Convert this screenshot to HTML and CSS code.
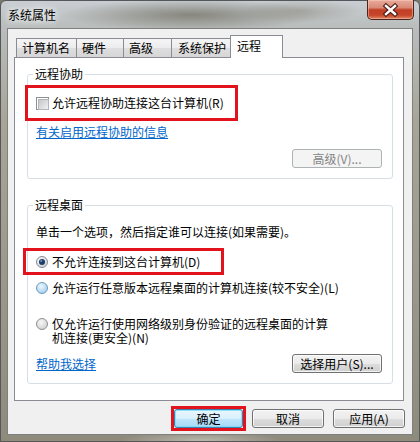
FILE: index.html
```html
<!DOCTYPE html>
<html lang="zh-CN">
<head>
  <meta charset="UTF-8">
  <title>系统属性</title>
  <link rel="stylesheet" href="styles.css">
</head>
<body>
  <div class="window">
    <!-- Title bar -->
    <div class="titlebar">
      <span class="title">系统属性</span>
      <div class="close-btn">
        <svg width="47" height="20" viewBox="0 0 47 20">
          <path d="M19 6 L28 14 M28 6 L19 14" stroke="#4a1d15" stroke-width="4.6" stroke-linecap="square"/>
          <path d="M19 6 L28 14 M28 6 L19 14" stroke="#fff" stroke-width="2.4" stroke-linecap="square"/>
        </svg>
      </div>
    </div>

    <!-- Client area -->
    <div class="client">
      <div class="tabs">
        <div class="tab tab-name">计算机名</div>
        <div class="tab tab-hw">硬件</div>
        <div class="tab tab-adv">高级</div>
        <div class="tab tab-sys">系统保护</div>
        <div class="tab tab-remote active">远程</div>
      </div>

      <div class="panel">
        <fieldset class="group group-assist">
          <legend>远程协助</legend>
          <div class="mark mark-check">
            <span class="checkbox"></span>
            <span>允许远程协助连接这台计算机(R)</span>
          </div>
          <a class="link">有关启用远程协助的信息</a>
          <div class="btn-row">
            <button class="btn btn-wide disabled">高级(V)...</button>
          </div>
        </fieldset>

        <fieldset class="group group-desktop">
          <legend>远程桌面</legend>
          <p class="hint">单击一个选项，然后指定谁可以连接(如果需要)。</p>
          <div class="mark mark-radio">
            <div class="option">
              <svg class="radio" width="12" height="12" viewBox="0 0 12 12">
                <defs>
                  <radialGradient id="r1" cx="40%" cy="35%" r="70%">
                    <stop offset="0" stop-color="#ffffff"/>
                    <stop offset="1" stop-color="#c9cdd1"/>
                  </radialGradient>
                </defs>
                <circle cx="6" cy="6" r="5.5" fill="url(#r1)" stroke="#8a8e93"/>
                <circle cx="6" cy="6" r="3" fill="#1d3c66"/>
                <circle cx="5.2" cy="5.1" r="1" fill="#6f9cd0"/>
              </svg>
              <span>不允许连接到这台计算机(D)</span>
            </div>
          </div>
          <div class="option option-any">
            <svg class="radio" width="12" height="12" viewBox="0 0 12 12">
              <defs>
                <radialGradient id="r2" cx="40%" cy="35%" r="70%">
                  <stop offset="0" stop-color="#eef8fe"/>
                  <stop offset="1" stop-color="#9fcdec"/>
                </radialGradient>
              </defs>
              <circle cx="6" cy="6" r="5.5" fill="url(#r2)" stroke="#6d9cc0"/>
            </svg>
            <span>允许运行任意版本远程桌面的计算机连接(较不安全)(L)</span>
          </div>
          <div class="option option-nla">
            <svg class="radio" width="12" height="12" viewBox="0 0 12 12">
              <defs>
                <radialGradient id="r3" cx="40%" cy="35%" r="70%">
                  <stop offset="0" stop-color="#f7f7f7"/>
                  <stop offset="1" stop-color="#cfcfcf"/>
                </radialGradient>
              </defs>
              <circle cx="6" cy="6" r="5.5" fill="url(#r3)" stroke="#8e8f8f"/>
            </svg>
            <span class="two-line">仅允许运行使用网络级别身份验证的远程桌面的计算<br>机连接(更安全)(N)</span>
          </div>
          <div class="footer-row">
            <a class="link">帮助我选择</a>
            <button class="btn btn-wide">选择用户(S)...</button>
          </div>
        </fieldset>
      </div>

      <!-- Dialog buttons -->
      <div class="actions">
        <div class="mark mark-ok">
          <button class="btn btn-default">确定</button>
        </div>
        <button class="btn btn-cancel">取消</button>
        <button class="btn btn-apply">应用(A)</button>
      </div>
    </div>
  </div>
</body>
</html>
```

FILE: styles.css
```css
/* Reset and base styles */
* {
  box-sizing: border-box;
  margin: 0;
  padding: 0;
}

html, body {
  width: 420px;
  height: 442px;
  overflow: hidden;
}

body {
  font-family: "Noto Sans CJK SC", "Liberation Sans", sans-serif;
  font-size: 12px;
  line-height: 14px;
  color: #000;
  background: #7a776c;
}

/* Window frame (aero glass look) */
.window {
  width: 420px;
  height: 442px;
  display: flex;
  flex-direction: column;
  padding: 0 6px 6px;
  border: 1px solid #55575a;
  border-radius: 6px 6px 0 0;
  background:
    radial-gradient(ellipse 130px 16px at 190px 14px, rgba(88, 82, 66, 0.55), transparent),
    radial-gradient(ellipse 60px 12px at 300px 10px, rgba(120, 112, 95, 0.35), transparent),
    radial-gradient(ellipse 80px 10px at 200px 440px, rgba(230, 228, 220, 0.5), transparent),
    linear-gradient(180deg, #c8ced2 0, #b9bdbc 26px, #a8a597 120px, #9a9688 300px, #8e8a7c 100%);
}

.titlebar {
  height: 27px;
  display: flex;
  justify-content: space-between;
  align-items: flex-start;
}

.title {
  padding: 7px 0 0 1px;
  text-shadow: 0 0 6px #fff, 0 0 10px #fff;
}

.close-btn {
  width: 47px;
  height: 20px;
  margin: -1px -1px 0 0;
  border: 1px solid #4d231b;
  border-top: none;
  border-radius: 0 0 5px 5px;
  background: linear-gradient(180deg, #e9ab9b 0%, #d98a77 40%, #c23f25 52%, #c6462b 80%, #df8763 100%);
  box-shadow: inset 0 0 0 1px rgba(255, 210, 200, 0.45);
}

.close-btn svg {
  display: block;
  margin-left: -1px;
}

/* Client area */
.client {
  flex: 1;
  display: flex;
  flex-direction: column;
  padding: 6px 8px 0 6px;
  border: 1px solid #7e8082;
  background: #f0f0f0;
}

/* Tabs */
.tabs {
  display: flex;
  align-items: flex-end;
  height: 22px;
  padding-left: 2px;
}

.tab {
  height: 19px;
  margin-left: -1px;
  padding: 2px 0 0 5px;
  border: 1px solid #898c95;
  border-bottom: none;
  background: linear-gradient(180deg, #f5f5f5 0%, #ececec 50%, #dedede 51%, #d6d6d6 100%);
}

.tab:first-child {
  margin-left: 0;
}

.tab-name { width: 61px; }
.tab-hw { width: 48px; }
.tab-adv { width: 49px; }
.tab-sys { width: 60px; padding-left: 6px; }

.tab.active {
  width: 53px;
  height: 23px;
  margin-bottom: -1px;
  padding: 3px 0 0 6px;
  background: #fff;
  position: relative;
  z-index: 1;
}

/* Tab page */
.panel {
  border: 1px solid #898c95;
  background: #fff;
  padding: 9px 10px 16px 12px;
}

.group {
  border: 1px solid #d5dfe5;
  border-radius: 3px;
  padding: 4px 10px 10px 8px;
}

.group legend {
  margin-left: -3px;
  padding: 0 2px;
  line-height: 14px;
}

.group-desktop {
  margin-top: 19px;
  padding-top: 13px;
}

/* Red annotation boxes */
.mark {
  border: 3px solid #e2131c;
  display: flex;
  align-items: center;
}

.mark-check {
  width: 213px;
  height: 36px;
  margin-left: -11px;
  padding-left: 8px;
  gap: 3px;
}

.checkbox {
  width: 13px;
  height: 13px;
  border: 1px solid #8e8f8f;
  padding: 1px;
  background: #fff;
}

.checkbox::before {
  content: "";
  display: block;
  width: 100%;
  height: 100%;
  border: 1px solid #b3b6b9;
  background: linear-gradient(135deg, #c4c7ca, #f1f1f1);
}

.link {
  display: block;
  color: #0066cc;
  text-decoration: underline;
}

.group-assist .link {
  margin-top: 4px;
  width: max-content;
}

.btn-row {
  display: flex;
  justify-content: flex-end;
  margin-top: 10px;
}

/* Radio options */
.mark-radio {
  width: 201px;
  height: 27px;
  margin-top: 9px;
  margin-left: -13px;
  padding-left: 10px;
}

.option {
  display: flex;
  align-items: center;
  gap: 4px;
}

.radio {
  flex: none;
  display: block;
}

.option-any {
  margin-top: 6px;
}

.option-nla {
  margin-top: 22px;
  align-items: flex-start;
}

.option-nla .radio {
  margin-top: 1px;
}

.footer-row {
  margin-top: 9px;
  display: flex;
  justify-content: space-between;
  align-items: center;
}

/* Buttons */
.btn {
  height: 19px;
  font: inherit;
  line-height: 15px;
  color: #000;
  border: 1px solid #707070;
  border-radius: 3px;
  background: linear-gradient(180deg, #f2f2f2 0%, #ebebeb 50%, #dddddd 51%, #cfcfcf 100%);
  box-shadow: inset 0 0 0 1px rgba(255, 255, 255, 0.75);
}

.btn-wide {
  width: 90px;
}

.btn.disabled {
  color: #838383;
  border-color: #adb2b5;
  background: #f4f4f4;
  box-shadow: none;
}

.actions {
  margin: 5px -1px 0 0;
  display: flex;
  justify-content: flex-end;
  align-items: center;
}

.mark-ok {
  width: 75px;
  height: 25px;
}

.btn-default {
  width: 69px;
  border-color: #3c7fb1;
  background: linear-gradient(180deg, #eaf6fd 0%, #d9f0fc 50%, #bee6fd 51%, #a7d9f5 100%);
  box-shadow: inset 0 0 0 1px rgba(120, 220, 245, 0.8);
}

.btn-cancel {
  width: 72px;
  margin-left: 6px;
}

.btn-apply {
  width: 72px;
  margin-left: 9px;
}
```
